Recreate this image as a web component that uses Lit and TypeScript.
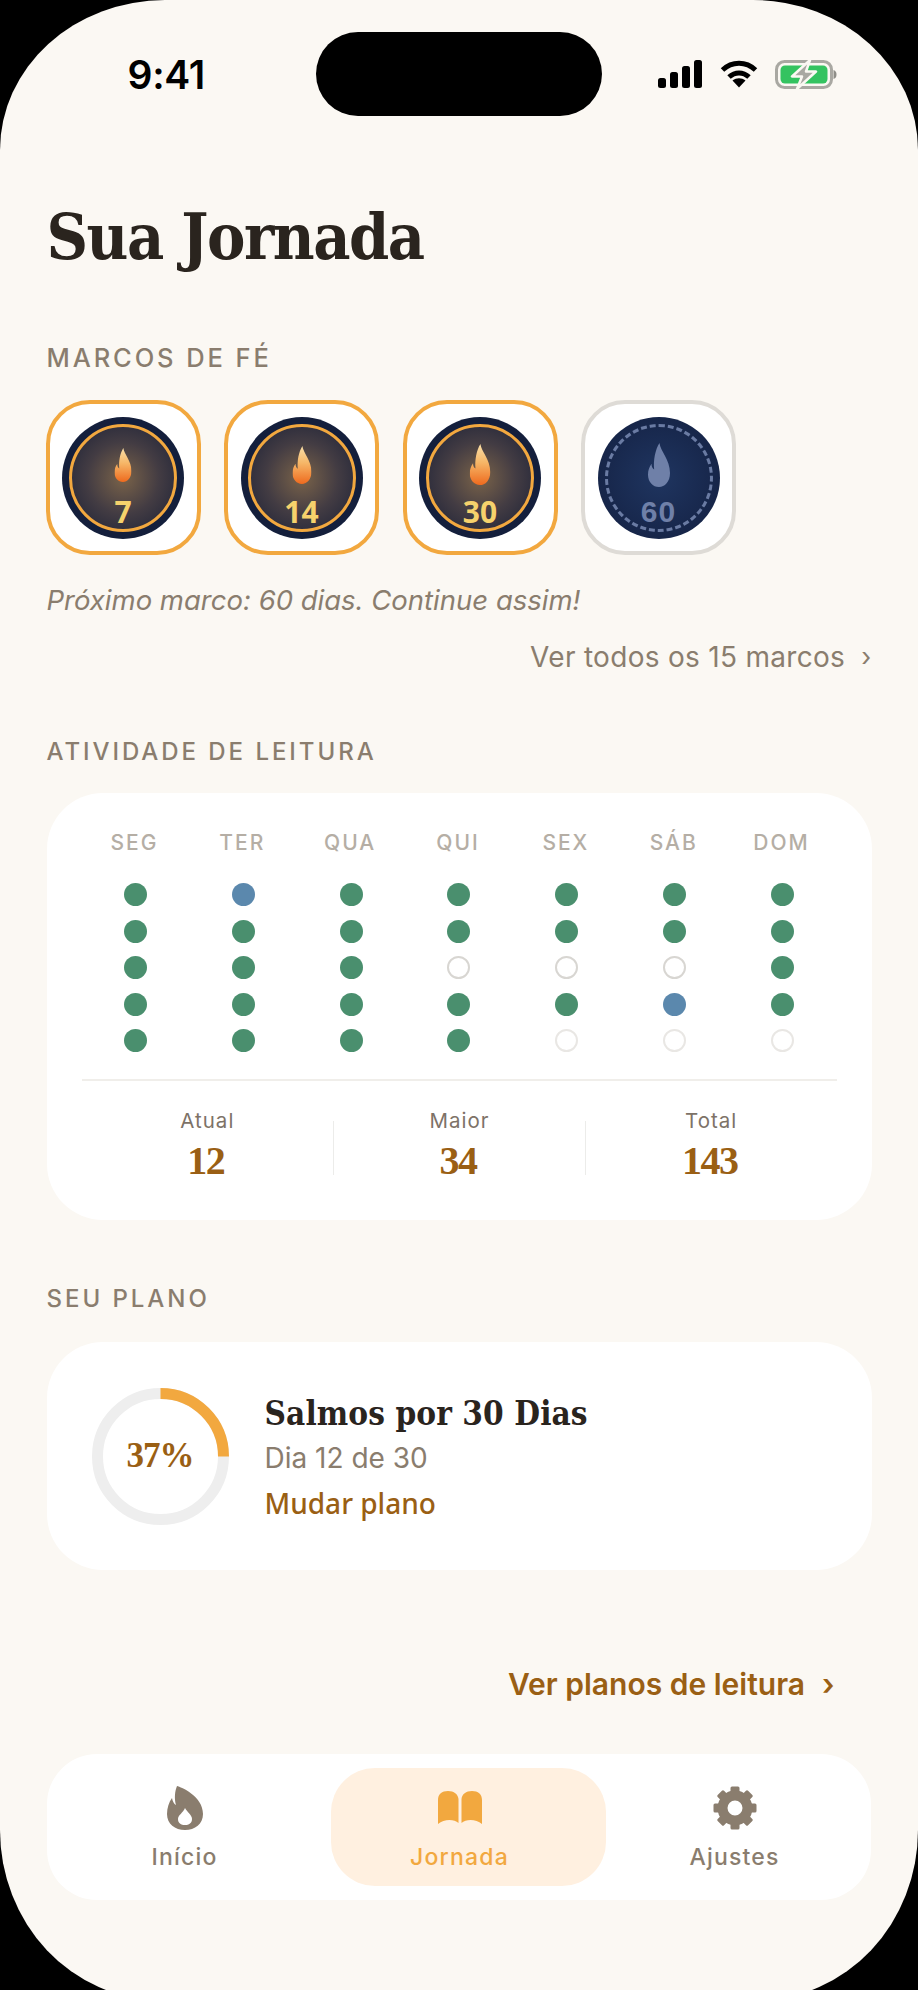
import { LitElement, html, css, svg } from "lit";
import { customElement } from "lit/decorators.js";

const FLAME = "M26 0C28 18 50 38 50 68C50 88 38 100 25 100C11 100 0 88 0 72C0 62 3 54 8 47C8 53 10 58 14 60C12 40 16 16 26 0Z";
const medals = [
  { n: "7", h: 34 },
  { n: "14", h: 38 },
  { n: "30", h: 41 },
  { n: "60", h: 44, locked: true },
];
const days = ["SEG", "TER", "QUA", "QUI", "SEX", "SÁB", "DOM"];
// g done, b frozen, o empty, f faint
const grid = ["ggggg", "bgggg", "ggggg", "ggogg", "ggogf", "ggobf", "ggggf"];
const stats = [
  ["Atual", "12"],
  ["Maior", "34"],
  ["Total", "143"],
];

@customElement("app-root")
export class AppRoot extends LitElement {
  static styles = css`
    :host { display: block; width: 918px; height: 1990px; background: #000; overflow: hidden; font-family: Inter, "Noto Sans", sans-serif; }
    .screen { height: 2000px; box-sizing: border-box; background: #fbf8f3; border-radius: 165px 165px 160px 160px / 150px 150px 170px 170px; padding: 0 46.5px; display: flex; flex-direction: column; position: relative; }
    .status { height: 148px; flex: none; display: flex; align-items: flex-start; position: relative; }
    .time { font: 600 39px/1 Inter, sans-serif; color: #000; margin: 55px 0 0 81px; letter-spacing: -0.3px; }
    .island { position: absolute; left: 269.5px; top: 32px; width: 286px; height: 84px; border-radius: 42px; background: #000; }
    .sys { position: absolute; left: 611.5px; top: 60px; display: flex; gap: 18px; align-items: flex-start; }
    .sys svg { display: block; }
    h1 { margin: 47px 0 0; font: 700 64px/84px "DejaVu Serif", "Liberation Serif", serif; font-stretch: condensed; color: #2a241e; letter-spacing: -1.5px; height: 84px; }
    .label { font: 500 24px/28px Inter, sans-serif; color: #8a7d6e; letter-spacing: 2.95px; height: 28px; }
    .label.first { margin-top: 65px; font-size: 25.5px; letter-spacing: 2.9px; }
    .medals { display: flex; gap: 23.5px; margin: 28px 0 0 -1px; }
    .medal { width: 155px; height: 155px; box-sizing: border-box; border: 4.5px solid #f2a83f; border-radius: 44px; background: #fff; display: flex; align-items: center; justify-content: center; }
    .medal.locked { border-color: #dedbd6; }
    .disc { width: 122px; height: 122px; border-radius: 50%; background: #141f3c; display: flex; align-items: center; justify-content: center; }
    .ring { width: 108px; height: 108px; box-sizing: border-box; border-radius: 50%; border: 3px solid #f2a83f; background: radial-gradient(circle at 50% 50%, #7a6349 0%, #433c43 50%, #1a2036 100%); display: flex; flex-direction: column; align-items: center; position: relative; }
    .locked .disc { background: radial-gradient(circle, #1f3560 0%, #192a50 50%, #131f3f 100%); }
    .locked .ring { border: 3.5px dashed #6a7ba3; background: none; }
    .flame { position: absolute; left: 50%; transform: translateX(-50%); }
    .num { position: absolute; left: 0; right: 0; bottom: 1px; text-align: center; font: 700 30px/32px "Noto Sans", sans-serif; color: #f6d26c; }
    .locked .num { color: #6f80a8; font-family: "Liberation Sans", sans-serif; letter-spacing: 1px; }
    .next { margin-top: 29px; font: italic 400 27.5px/32px Inter, sans-serif; color: #8a7d6e; }
    .more { margin-top: 25px; display: flex; justify-content: flex-end; align-items: center; gap: 16px; font: 400 28px/32px Inter, sans-serif; letter-spacing: 0.3px; color: #8a7d6e; }
    .chev { font-size: 26px; }
    .label.act { margin-top: 65px; }
    .card { background: #fff; border-radius: 56px; }
    .activity { margin-top: 27px; height: 427px; box-sizing: border-box; padding: 36px 35px 0 35px; }
    .week { display: grid; grid-template-columns: repeat(7, 1fr); justify-items: center; }
    .day { font: 500 21px/28px Inter, sans-serif; letter-spacing: 2px; color: #b5aea5; margin-left: -2px; }
    .col { display: flex; flex-direction: column; gap: 13.5px; margin-top: 26px; }
    .dot { width: 23px; height: 23px; box-sizing: border-box; border-radius: 50%; background: #4a8f6e; }
    .dot.b { background: #5b88ad; }
    .dot.o { background: #fff; border: 2px solid #d8d6d2; }
    .dot.f { background: #fff; border: 2px solid #e9e7e4; }
    .divider { height: 1.5px; background: #f0eeea; margin-top: 27px; }
    .stats { display: grid; grid-template-columns: repeat(3, 1fr); margin-top: 26px; }
    .stat { display: flex; flex-direction: column; align-items: center; border-left: 1.5px solid #ececea; margin-top: 14px; height: 54px; }
    .stat:first-child { border-left: 0; }
    .stat span { font: 400 20.5px/28px Inter, sans-serif; letter-spacing: 1px; color: #7d7267; margin-top: -14px; }
    .stat b { font: 700 40px/44px "Liberation Serif", serif; color: #9a5f14; letter-spacing: -1.5px; margin: 4px 3px 0 0; }
    .label.plan { margin-top: 65px; }
    .plan-card { margin-top: 29px; height: 228px; display: flex; align-items: center; padding-left: 45px; }
    .donut { width: 137px; height: 137px; position: relative; flex: none; display: flex; align-items: center; justify-content: center; }
    .donut svg { position: absolute; inset: 0; }
    .donut b { font: 700 35px/40px "Liberation Serif", serif; color: #9a5f14; letter-spacing: -1px; }
    .info { margin-left: 36px; display: flex; flex-direction: column; }
    .info h2 { margin: 0; font: 700 33px/44px "DejaVu Serif", "Liberation Serif", serif; font-stretch: condensed; color: #2a241e; letter-spacing: 0.1px; }
    .info .sub { font: 400 28px/34px Inter, sans-serif; color: #8a7d6e; margin-top: 5px; }
    .info .chg { font: 500 28px/34px "Noto Sans", sans-serif; color: #9a5f14; margin-top: 11px; }
    .cta { margin-top: 97px; padding-right: 37px; display: flex; justify-content: flex-end; align-items: center; gap: 17px; font: 600 30px/34px Inter, sans-serif; color: #9a5f14; }
    .tabs { position: absolute; left: 47px; top: 1754px; width: 824px; height: 146px; border-radius: 50px; background: #fff; display: grid; grid-template-columns: repeat(3, 275px); }
    .pill { position: absolute; left: 284px; top: 14px; width: 275px; height: 118px; border-radius: 44px; background: #fff0e0; }
    .tab { position: relative; display: flex; flex-direction: column; align-items: center; color: #8a7d6e; font: 500 23px/28px Inter, sans-serif; letter-spacing: 1.2px; }
    .tab.on { color: #f2a83f; }
    .ico { height: 44px; margin-top: 32px; display: flex; align-items: center; }
    .tab span { margin-top: 13px; }
  `;

  private flame(h: number, locked: boolean, id: string) {
    const w = h * 0.5;
    return html`<svg class="flame" style="top:${38 - h / 2}px" width=${w} height=${h} viewBox="0 0 50 100">
      <defs><linearGradient id=${id} x1="0" y1="0" x2="0" y2="1">
        <stop offset="0" stop-color="#f9dfa8"/><stop offset="0.45" stop-color="#f6b667"/><stop offset="1" stop-color="#ee6a1e"/>
      </linearGradient></defs>
      <path d=${FLAME} fill=${locked ? "#6f80a8" : `url(#${id})`}/>
    </svg>`;
  }

  private statusIcons() {
    return html`<div class="sys">
      <svg width="44" height="28" viewBox="0 0 44 28" fill="#000">
        <rect x="0" y="18" width="8" height="10" rx="2.5"/><rect x="12" y="12" width="8" height="16" rx="2.5"/>
        <rect x="24" y="6" width="8" height="22" rx="2.5"/><rect x="36" y="0" width="8" height="28" rx="2.5"/>
      </svg>
      <svg width="38" height="28" viewBox="0 0 38 28" fill="none" stroke="#000" stroke-width="5">
        <path d="M2.5 10C12 1 26 1 35.5 10"/><path d="M9 17C15 11.500 23 11.500 29 17"/>
        <path d="M12.500 20.500L19 27.500L25.500 20.500C21.500 17.500 16.500 17.500 12.500 20.500Z" fill="#000" stroke="none"/>
      </svg>
      <svg width="62" height="29" viewBox="0 0 62 29" style="margin-left:-1px">
        <rect x="1.500" y="1.500" width="55" height="26" rx="8" fill="none" stroke="#a9a8a2" stroke-width="3"/>
        <rect x="5.500" y="5.500" width="47" height="18" rx="4.500" fill="#34c360"/>
        <path d="M58.500 10C61 11 61.500 12.500 61.500 14.500C61.500 16.500 61 18 58.500 19Z" fill="#8f8e88"/>
        <path d="M35 0L17 16.500H27L22 29L41 11.500H31Z" fill="#a9a8a2" stroke="#fbf8f3" stroke-width="2.500" stroke-linejoin="round"/>
      </svg>
    </div>`;
  }

  private gear() {
    const teeth = [0, 45, 90, 135, 180, 225, 270, 315].map(
      (a) => svg`<rect x="17.500" y="0.500" width="9" height="10" rx="1.500" transform="rotate(${a} 22 22)"/>`
    );
    return html`<svg width="44" height="44" viewBox="0 0 44 44" fill="#8a7d6e">
      ${teeth}<circle cx="22" cy="22" r="12.500" fill="none" stroke="#8a7d6e" stroke-width="10"/>
    </svg>`;
  }

  render() {
    return html`<div class="screen">
      <div class="status"><div class="time">9:41</div><div class="island"></div>${this.statusIcons()}</div>
      <h1>Sua Jornada</h1>
      <div class="label first">MARCOS DE FÉ</div>
      <div class="medals">
        ${medals.map((m, i) => html`<div class="medal ${m.locked ? "locked" : ""}"><div class="disc"><div class="ring">
          ${this.flame(m.h, !!m.locked, `fl${i}`)}<div class="num">${m.n}</div>
        </div></div></div>`)}
      </div>
      <div class="next">Próximo marco: 60 dias. Continue assim!</div>
      <div class="more">Ver todos os 15 marcos <span class="chev">›</span></div>
      <div class="label act">ATIVIDADE DE LEITURA</div>
      <div class="card activity">
        <div class="week">
          ${days.map((d) => html`<div class="day">${d}</div>`)}
          ${grid.map((c) => html`<div class="col">${[...c].map((s) => html`<div class="dot ${s}"></div>`)}</div>`)}
        </div>
        <div class="divider"></div>
        <div class="stats">
          ${stats.map(([a, b]) => html`<div class="stat"><span>${a}</span><b>${b}</b></div>`)}
        </div>
      </div>
      <div class="label plan">SEU PLANO</div>
      <div class="card plan-card">
        <div class="donut">
          <svg width="137" height="137" viewBox="0 0 137 137" fill="none" stroke-width="11">
            <circle cx="68.500" cy="68.500" r="63" stroke="#eeeeee"/>
            <path d="M68.500 5.500A63 63 0 0 1 131.500 68.500" stroke="#f2a83f"/>
          </svg>
          <b>37%</b>
        </div>
        <div class="info">
          <h2>Salmos por 30 Dias</h2>
          <div class="sub">Dia 12 de 30</div>
          <div class="chg">Mudar plano</div>
        </div>
      </div>
      <div class="cta">Ver planos de leitura <span>›</span></div>
      <div class="tabs">
        <div class="pill"></div>
        <div class="tab"><div class="ico"><svg width="36" height="44" viewBox="0 0 36 44">
          <path fill="#8a7d6e" fill-rule="evenodd" d="M10 0C14 1 36 10 36 28C36 38 28 44 18 44C8 44 0 38 0 28C0 22 2 16 5 12C5.500 15 7 18 9 19C7 12 8 5 10 0ZM18 22C16 27 11 29 11 33C11 37 14 39 18 39C22 39 25 37 25 33C25 29 20 26 18 22Z"/>
        </svg></div><span>Início</span></div>
        <div class="tab on"><div class="ico"><svg width="44" height="34" viewBox="0 0 44 34" fill="#f2a83f">
          <path d="M0 9C0 3 4 0 10 0C16 0 20 3 20.500 8V32C16 28 6 28 0 33Z"/>
          <path d="M44 9C44 3 40 0 34 0C28 0 24 3 23.500 8V32C28 28 38 28 44 33Z"/>
        </svg></div><span>Jornada</span></div>
        <div class="tab"><div class="ico">${this.gear()}</div><span>Ajustes</span></div>
      </div>
    </div>`;
  }
}
